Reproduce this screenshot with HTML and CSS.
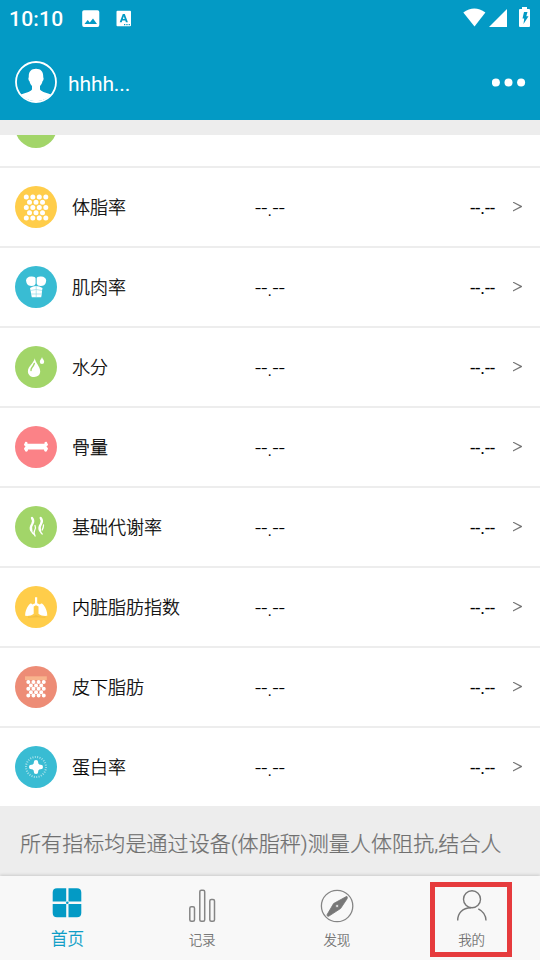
FILE: index.html
```html
<!DOCTYPE html>
<html lang="zh-CN">
<head>
<meta charset="utf-8">
<title>首页</title>
<link rel="stylesheet" href="styles.css">
</head>
<body>
<div class="app">
  <header class="header">
    <div class="status">
      <span class="clock">10:10</span>
      <svg class="s-image" width="18" height="18" viewBox="0 0 18 18"><path fill="#fff" fill-rule="evenodd" d="M2 .3h13.500q1.800 0 1.800 1.800v13q0 1.900-1.800 1.900H2q-1.800 0-1.800-1.900V2.100Q.2.300 2 .3zM2.500 14h12.500l-4-5.600-3.200 4.200-2.100-2.600z"/></svg>
      <svg class="s-lang" width="16" height="18" viewBox="0 0 16 18"><path fill="#fff" fill-rule="evenodd" d="M1.500.8h12.500q1 0 1 1v13.500q0 1-1 1H1.500q-1 0-1-1V1.800q0-1 1-1zM3.700 12.200h2l.6-1.700h3l.6 1.700h2L8.800 4H6.800zM6.900 8.900l.9-2.700.9 2.700zM8 14v1.300h1.300V14zM10.300 14v1.300h1.300V14zM12.600 14v1.300h1.300V14z"/></svg>
      <svg class="s-wifi" width="23" height="19" viewBox="0 0 23 19"><path fill="#fff" d="M.3 4.600Q11.300-3.800 22.400 4.600L11.500 18.500z"/></svg>
      <svg class="s-signal" width="18" height="18" viewBox="0 0 18 18"><path fill="#fff" d="M0 18 18 0v18z"/></svg>
      <svg class="s-battery" width="11" height="20" viewBox="0 0 11 20"><path fill="#fff" d="M3 0h5v2h2q1 0 1 1v16q0 1-1 1H1q-1 0-1-1V3q0-1 1-1h2z"/><path fill="#039ac5" d="M5 5h3.500L7.300 9.300h2.200L4.500 17l.7-5.500H3.500z"/></svg>
    </div>
    <div class="userbar">
      <svg class="avatar" width="42" height="42" viewBox="0 0 42 42"><circle cx="21" cy="21" r="20" fill="none" stroke="#fff" stroke-width="1.800"/><path fill="#fff" d="M21 7.800c5 0 7.600 3.200 7.200 8.400.8.600.3 3.500-.7 4-.5 2-1.300 3.600-2.500 4.800v3.500c2.200 3 7.500 3.200 11 5.200A20.300 20.300 0 0 1 6 33.700c3.500-2 8.800-2.200 11-5.200V25c-1.200-1.200-2-2.800-2.500-4.800-1-.5-1.500-3.400-.7-4-.4-5.200 2.200-8.400 7.200-8.400z"/></svg>
      <span class="username">hhhh...</span>
      <svg class="more" width="34" height="9" viewBox="0 0 34 9"><g fill="#fff"><circle cx="3.900" cy="4.500" r="4"/><circle cx="16.500" cy="4.500" r="4"/><circle cx="29.100" cy="4.500" r="4"/></g></svg>
    </div>
  </header>

  <main class="content">
    <div class="list">
      <div class="row row-first">
        <svg class="icon" viewBox="0 0 42 42"><circle class="green" cx="21" cy="21" r="21"/></svg>
      </div>
      <div class="row">
        <svg class="icon" viewBox="0 0 42 42"><circle class="yellow" cx="21" cy="21" r="21"/><path class="dots" stroke-width="5" stroke-dasharray="0 6.500" d="M11.300 11h20M14.500 16.300h14M11.300 21.500h20M14.500 26.700h14M11.300 32h20"/></svg>
        <span class="name">体脂率</span><span class="value">--.--</span><span class="level">--.--</span><i class="chevron"></i>
      </div>
      <div class="row">
        <svg class="icon" viewBox="0 0 42 42"><circle class="teal" cx="21" cy="21" r="21"/><g fill="#fff"><path d="M11 14.500q.5-3.600 5-3.900 4.500-.3 4.600 2v4.800q-.6 2.500-4 2.500-4 0-5-2.900zM31.200 14.500q-.5-3.600-5-3.900-4.500-.3-4.500 2v4.800q.6 2.500 4 2.500 4 0 5-2.900z"/><path d="M15 22q6-3.800 12.500 0l-.5 3-.3 3.500-.5 2.700H16.800l-.6-2.700-.5-3.500z"/></g><path stroke="#84d5e3" stroke-width=".6" fill="none" d="M21.200 20v11M15.500 24.500l5.700-1 5.800 1M16 28h10.500"/></svg>
        <span class="name">肌肉率</span><span class="value">--.--</span><span class="level">--.--</span><i class="chevron"></i>
      </div>
      <div class="row">
        <svg class="icon" viewBox="0 0 42 42"><circle class="green" cx="21" cy="21" r="21"/><path fill="#fff" d="M19.800 12.300c.4 4.200 5.400 8.200 5.400 13 0 3.600-2.600 5.700-6.100 5.700S12.900 28.700 12.900 25.200c0-4.800 6-8.200 6.900-12.900zM27 11c.2 1.600 2.200 2.800 2.200 4.700a2.200 2.200 0 0 1-4.400 0c0-1.900 2-3.100 2.200-4.700z"/><path stroke="#a2d569" stroke-width="1.400" stroke-linecap="round" fill="none" d="M19.300 17.500q-.7 2.300-2.300 4-1.200 1.500-1 3"/></svg>
        <span class="name">水分</span><span class="value">--.--</span><span class="level">--.--</span><i class="chevron"></i>
      </div>
      <div class="row">
        <svg class="icon" viewBox="0 0 42 42"><circle class="pink" cx="21" cy="21" r="21"/><path fill="#fff" d="M12.500 17.700h17c-.5-2.300 2.700-2.700 2.700-.4 1.500.8.800 2.200-.8 3.200 1.600 1.200 2.300 2.700.8 3.500 0 2.400-3.200 2.200-3.200-.6H13c0 2.800-3.200 3-3.200.6-1.500-.8-.8-2.300.8-3.500-1.600-1-2.300-2.400-.8-3.200 0-2.300 3.200-1.900 2.700.4z"/></svg>
        <span class="name">骨量</span><span class="value">--.--</span><span class="level">--.--</span><i class="chevron"></i>
      </div>
      <div class="row">
        <svg class="icon" viewBox="0 0 42 42"><circle class="green" cx="21" cy="21" r="21"/><g fill="none" stroke="#fff" stroke-linecap="round"><path stroke-width="2.300" d="M17 12q2.300 3 .2 6.200-2.300 3.300-.9 6.300"/><path stroke-width="2.300" d="M25.700 12q2.300 3 .2 6.200-2.300 3.300-.9 6.300"/><path stroke-width="1.300" d="M16.300 24q.5 2.500 2.200 4M25 24q.5 2.500 2.200 4M20 19.500q1.200 2.500-.4 5-1.300 2.300.5 5.500M28.500 19q0 2.700-1.300 5"/></g></svg>
        <span class="name">基础代谢率</span><span class="value">--.--</span><span class="level">--.--</span><i class="chevron"></i>
      </div>
      <div class="row">
        <svg class="icon" viewBox="0 0 42 42"><circle class="yellow" cx="21" cy="21" r="21"/><path fill="#e9b83c" opacity=".6" d="M13 30.500q5 .5 8-1.500 4 2.500 10 1.500l-1 1.200q-8-1-17 0z"/><path fill="#fff" d="M20 11.300h2.200v6l2.800 1.200c.8-1.500 2.500-1.300 3.600.6 2.500 3.600 3.700 6.500 3.700 10.700-3 .3-6.600 0-8.800-2v-7.300L21 19.300l-2.300 1.200v7.300c-2.200 2-5.700 2.300-8.600 2 0-4.200 1.200-7.100 3.700-10.700 1.100-1.900 2.800-2.100 3.600-.6l2.600-1.200z"/></svg>
        <span class="name">内脏脂肪指数</span><span class="value">--.--</span><span class="level">--.--</span><i class="chevron"></i>
      </div>
      <div class="row">
        <svg class="icon" viewBox="0 0 42 42"><circle class="coral" cx="21" cy="21" r="21"/><path fill="#f8b48d" d="M10 10.300h21.800V14H10z"/><path class="dots" stroke-width="4" stroke-dasharray="0 5.150" d="M13.300 16h16M15.900 19.400h11M13.300 22.800h16M15.900 26.200h11M13.300 29.600h16"/></svg>
        <span class="name">皮下脂肪</span><span class="value">--.--</span><span class="level">--.--</span><i class="chevron"></i>
      </div>
      <div class="row row-last">
        <svg class="icon" viewBox="0 0 42 42"><circle class="teal" cx="21" cy="21" r="21"/><circle cx="21" cy="21" r="10" fill="none" stroke="#a4e0ea" stroke-width="2" stroke-dasharray="1 1.400"/><path fill="none" stroke="#fff" stroke-width="4.400" stroke-linecap="round" d="M21 16.200v9.600M16.200 21h9.600"/><circle cx="21" cy="21" r="4" fill="#fff"/></svg>
        <span class="name">蛋白率</span><span class="value">--.--</span><span class="level">--.--</span><i class="chevron"></i>
      </div>
    </div>
    <p class="note">所有指标均是通过设备(体脂秤)测量人体阻抗,结合人</p>
  </main>

  <nav class="tabs">
    <div class="tab active">
      <svg width="34" height="34" viewBox="0 0 34 34"><path fill="#039ac5" d="M7 2.300h9.200v13.300H2.700v-9q0-4.300 4.300-4.300zM18.500 2.300h8.500q4.300 0 4.300 4.300v9H18.500zM2.700 18h13.500v13.200H7q-4.300 0-4.300-4.200zM18.500 18h12.800v9q0 4.200-4.300 4.200h-8.500z"/><circle cx="17.300" cy="16.800" r="1.300" fill="#039ac5"/></svg>
      <span>首页</span>
    </div>
    <div class="tab">
      <svg width="34" height="34" viewBox="-.6 0 34 34"><g fill="none" stroke="#858585" stroke-width="1.500"><rect x="4.200" y="17.700" width="4.700" height="14.600" rx="1.500"/><rect x="14.200" y="1.300" width="4.900" height="31" rx="1.500"/><rect x="24.200" y="10.500" width="4.700" height="21.800" rx="1.500"/></g></svg>
      <span>记录</span>
    </div>
    <div class="tab">
      <svg width="34" height="34" viewBox="-.6 0 34 34"><circle cx="16.500" cy="17" r="15.700" fill="none" stroke="#858585" stroke-width="1.300"/><path fill="#777" stroke="#777" stroke-width=".8" stroke-linejoin="round" fill-rule="evenodd" d="M26.200 7.300q1 .5.300 2.500L20 19.500 8 27.300q-2 .3-1.500-1.700L13 14.500zM15.200 15.700v2.600h2.600v-2.600z"/></svg>
      <span>发现</span>
    </div>
    <div class="tab">
      <svg width="34" height="34" viewBox="0 0 34 34"><g fill="none" stroke="#777" stroke-width="1.400"><circle cx="17" cy="10.300" r="8.500"/><path d="M2.700 31.500c0-7 4.500-12.500 13.300-12.700M23.300 19.800c4.500 2.200 7.500 6 7.700 11.700"/></g></svg>
      <span>我的</span>
      <div class="highlight"></div>
    </div>
  </nav>
</div>
</body>
</html>
```
FILE: styles.css
```css
* { box-sizing: border-box; }

body {
  margin: 0;
  font-family: Roboto, "Noto Sans CJK SC", sans-serif;
  color: #000;
}

svg { display: block; flex: none; }

.app {
  display: flex;
  flex-direction: column;
  width: 540px;
  height: 960px;
  overflow: hidden;
  background: #ededed;
}

.header {
  flex: none;
  height: 120px;
  background: #039ac5;
  color: #fff;
}

.status {
  display: flex;
  align-items: center;
  height: 38px;
  padding: 0 10px 2px 9px;
}

.clock {
  width: 73px;
  font-size: 21px;
  font-weight: 500;
  letter-spacing: 0.2px;
  padding-top: 1px;
}

.s-image { margin-top: 2px; }
.s-lang { margin-left: 16px; margin-top: 2px; }
.s-wifi { margin-left: auto; margin-top: -2px; }
.s-signal { margin-left: 3px; }
.s-battery { margin-left: 12px; margin-top: -2px; }

.userbar {
  display: flex;
  align-items: center;
  height: 88px;
  padding: 0 14px 0 15px;
}

.username { margin-left: 11px; font-size: 21px; letter-spacing: -0.1px; padding-top: 3px; }
.more { margin-left: auto; }

.content {
  display: flex;
  flex-direction: column;
  flex: 1;
  min-height: 0;
  padding-top: 15px;
}

.list { flex: none; background: #fff; }

.row {
  display: flex;
  align-items: center;
  height: 80px;
  padding: 0 18px 0 15px;
  border-bottom: 2px solid #ededed;
}

.row-first {
  height: 33px;
  align-items: flex-start;
  overflow: hidden;
}

.row-first .icon { margin-top: -29px; }
.row-last { height: 78px; border-bottom: 0; }

.icon { width: 42px; height: 42px; }
.yellow { fill: #ffcd4a; }
.teal { fill: #39bcd3; }
.green { fill: #a2d569; }
.pink { fill: #fb8287; }
.coral { fill: #ed8c76; }

.dots { fill: none; stroke: #fff; stroke-linecap: round; }

.name {
  width: 183px;
  margin-left: 15px;
  padding-top: 2px;
  font-size: 18px;
  font-weight: 300;
  line-height: 26px;
  -webkit-text-stroke: 0.25px currentColor;
}

.value { padding-top: 2px; font-size: 21.500px; font-weight: 300; }
.level { margin-left: auto; font-size: 18px; }

.chevron {
  width: 9px;
  height: 10px;
  margin: 0 0 1px 18px;
  background: #777;
  clip-path: polygon(0 0, 9px 4.500px, 9px 5.500px, 0 10px, 0 8.700px, 7px 5px, 0 1.300px);
}

.note {
  margin: 23px 0 0 20px;
  font-size: 21px;
  font-weight: 300;
  letter-spacing: 0.08px;
  line-height: 30px;
  color: #707070;
  white-space: nowrap;
  -webkit-text-stroke: 0.25px currentColor;
}

.tabs {
  display: flex;
  flex: none;
  height: 84px;
  padding-right: 1px;
  background: #f8f8f8;
  box-shadow: 0 -1px 3px rgba(0, 0, 0, 0.15);
}

.tab {
  position: relative;
  display: flex;
  flex: 1;
  flex-direction: column;
  align-items: center;
  padding-top: 13px;
  font-size: 13.500px;
  font-weight: 300;
  line-height: 20px;
  color: #666;
  -webkit-text-stroke: 0.15px currentColor;
}

.tab span { margin-top: 7px; }

.active {
  padding-top: 10px;
  font-size: 16.500px;
  line-height: 24px;
  color: #039ac5;
  -webkit-text-stroke-width: 0.3px;
}

.active span { margin-top: 8px; }

.highlight {
  position: absolute;
  left: 26px;
  top: 6px;
  width: 82px;
  height: 75px;
  border: 5px solid #e63b3d;
}
```
